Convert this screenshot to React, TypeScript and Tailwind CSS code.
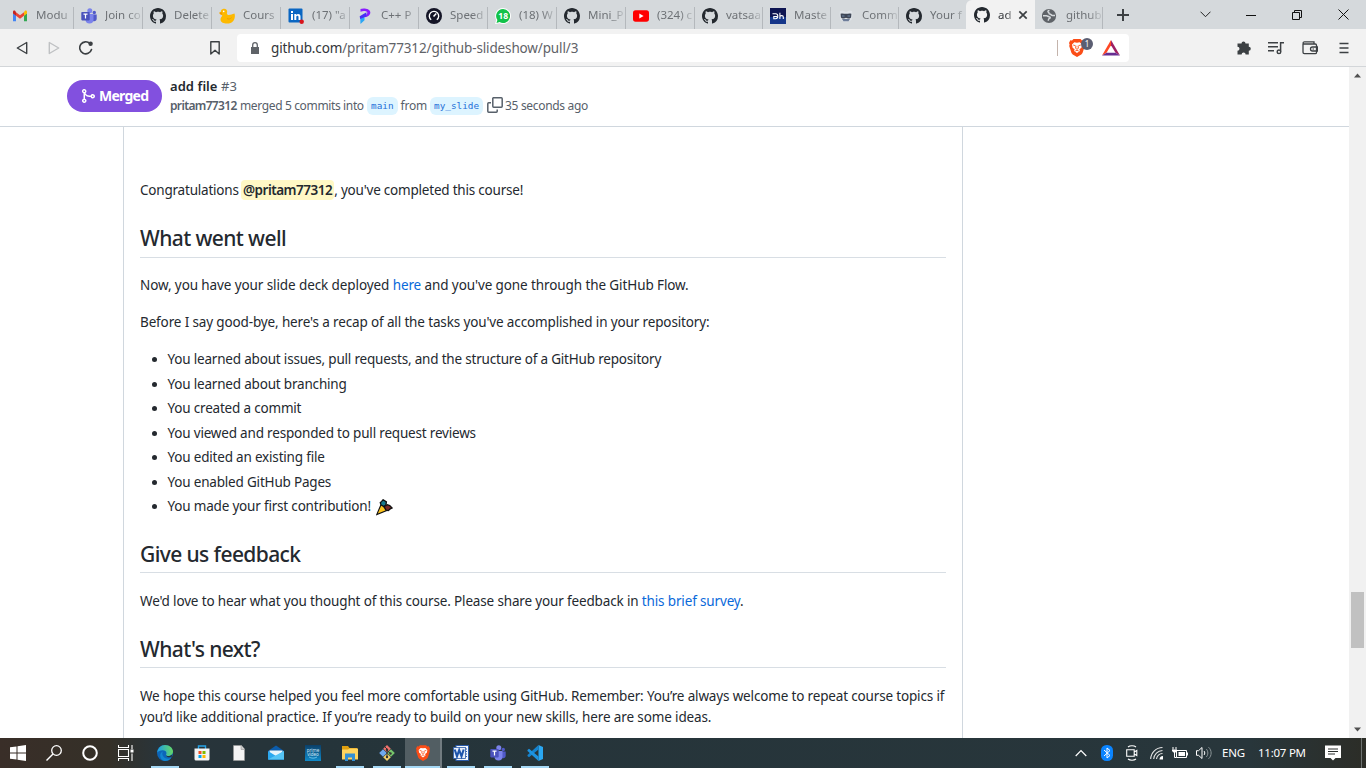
import type { ReactNode } from "react";

const GITHUB =
  "M8 0C3.58 0 0 3.58 0 8c0 3.54 2.29 6.53 5.47 7.59.4.07.55-.17.55-.38 0-.19-.01-.82-.01-1.49-2.01.37-2.53-.49-2.69-.94-.09-.23-.48-.94-.82-1.13-.28-.15-.68-.52-.01-.53.63-.01 1.08.58 1.23.82.72 1.21 1.87.87 2.33.66.07-.52.28-.87.51-1.07-1.78-.2-3.64-.89-3.64-3.95 0-.87.31-1.59.82-2.15-.08-.2-.36-1.02.08-2.12 0 0 .67-.21 2.2.82.64-.18 1.32-.27 2-.27.68 0 1.36.09 2 .27 1.53-1.04 2.2-.82 2.2-.82.44 1.1.16 1.92.08 2.12.51.56.82 1.27.82 2.15 0 3.07-1.87 3.75-3.65 3.95.29.25.54.73.54 1.48 0 1.07-.01 1.93-.01 2.2 0 .21.15.46.55.38A8.013 8.013 0 0016 8c0-4.42-3.58-8-8-8z";

function Svg({ children, className = "size-4", box = "0 0 16 16" }: { children: ReactNode; className?: string; box?: string }) {
  return (
    <svg viewBox={box} className={`shrink-0 ${className}`} fill="none">
      {children}
    </svg>
  );
}

const Github = () => (
  <Svg>
    <path d={GITHUB} fill="#24292f" />
  </Svg>
);

const Gmail = () => (
  <Svg>
    <path d="M1 4v9.2h3V7.4L1 5z" fill="#4285f4" />
    <path d="M15 4v9.2h-3V7.4L15 5z" fill="#34a853" />
    <path d="M12 4.2v3.6l3-2.3V4c0-1.6-1.5-1.800-2.300-1.100z" fill="#fbbc04" />
    <path d="M4 4.200v3.600L8 10.800l4-3V4.200L8 7.200z" fill="#ea4335" />
    <path d="M1 4v1.500l3 2.300V4.200L3.300 2.900C2.300 2.200 1 2.700 1 4z" fill="#c5221f" />
  </Svg>
);

const Teams = ({ className = "size-4" }: { className?: string }) => (
  <Svg className={className}>
    <circle cx="13.300" cy="4.500" r="1.700" fill="#5059c9" />
    <path d="M10.500 6.500h5.200v4.300c0 1.600-1 2.500-2.500 2.500h-1z" fill="#5059c9" />
    <circle cx="8.800" cy="2.800" r="2.500" fill="#7b83eb" />
    <path d="M4.500 6h8v5.500A4 4 0 0 1 4.500 11.500z" fill="#7b83eb" />
    <rect x="0.300" y="4" width="8.400" height="8.400" rx="0.800" fill="#4b53bc" />
    <path d="M2.500 6.200h4M4.500 6.200v4.300" stroke="#fff" strokeWidth="1.200" />
  </Svg>
);

const Duck = () => (
  <Svg>
    <path d="M4.500.8C7 .3 8.700 2.300 8 5c-.3 1.200.4 2 1.800 2 2.300 0 3.200-.8 5.700-1.500.8 2.500.3 5.500-1.300 7.500-1.500 2-3.500 2.500-6.200 2.500-3.300 0-6.300-1-6.500-4C1.400 9.500 3.200 8.800 3.300 7.300 2 7 .8 6 .3 4.700l1.500-.6C1.800 2.300 2.800 1.100 4.500.8z" fill="#fdb900" />
    <path d="M.3 4.700l2.200-.8.8 2.600C1.800 6.600.8 6 .3 4.700z" fill="#f59500" />
    <circle cx="4.700" cy="3.400" r=".8" fill="#fff" />
    <path d="M8 10.500c1.500 1 3.500.6 4.500-1" stroke="#f0a000" />
  </Svg>
);

const Linkedin = () => (
  <Svg>
    <rect x="0.500" y="0.500" width="14" height="14" rx="1" fill="#0a66c2" />
    <path d="M3 6h2v6H3zM3 3h2v2H3zM6.300 6h1.900v.9c1-1.500 4.300-1.400 4.300 1.500V12h-2V8.900c0-1.600-2.200-1.500-2.200 0V12h-2z" fill="#fff" />
    <circle cx="13.700" cy="13.700" r="2.200" fill="#d8141c" />
  </Svg>
);

const Purple = () => (
  <Svg>
    <path d="M3.500 1C6-.2 13 .3 13.300 4.200c.2 3-2.500 4.600-5.300 5L7 7.500c2-.6 3.500-1.500 3.300-3C10 3 6.500 2.500 3.500 3.700z" fill="#8a1cff" />
    <path d="M3.200 9.500L7.500 7.300v5L3.500 16z" fill="#2ba7f5" />
    <path d="M2.700 8.200L9.500 4.200l-.3 4.300-6 2.500z" fill="#4b2ff5" />
  </Svg>
);

const Speed = () => (
  <Svg>
    <circle cx="8" cy="8" r="8" fill="#141526" />
    <path d="M5.200 11.800A4.700 4.700 0 1 1 10.800 11.800" stroke="#fff" strokeWidth="1.400" />
    <path d="M7.500 8.500L10.300 5.600" stroke="#fff" strokeWidth="1.500" />
  </Svg>
);

const Whatsapp = () => (
  <Svg>
    <path d="M8 0a8 8 0 1 1-3.500 15.200L0 16l1.200-4A8 8 0 0 1 8 0z" fill="#fff" />
    <path d="M8 1a7 7 0 1 1-3.400 13.100L1.500 15l.9-3A7 7 0 0 1 8 1z" fill="#12c24a" />
    <text x="8.200" y="11" textAnchor="middle" fontSize="8.500" fontWeight="700" fill="#fff" fontFamily="Noto Sans, sans-serif">18</text>
  </Svg>
);

const Youtube = () => (
  <Svg>
    <rect x="0" y="2.300" width="16" height="11.400" rx="2.600" fill="#f00" />
    <path d="M6.300 5.600v4.800L10.600 8z" fill="#fff" />
  </Svg>
);

const Dh = () => (
  <Svg>
    <rect width="16" height="16" fill="#0e1552" />
    <rect y="9" width="16" height="7" fill="#15368a" />
    <path d="M2.500 5.800h3.300c1.500 0 2 1 2 2.300S7 10.800 5.500 10.800H3.800V8.500H7M9.900 4.800V11M9.900 8.500c.5-1.200 3.400-1.400 3.400.5V11" stroke="#fff" strokeWidth="1.100" />
  </Svg>
);

const Masked = () => (
  <Svg>
    <path d="M2 3l2.500-.5L8 4l3.500-1.500L14 3l.5 4-1 5-5.500 2-5.500-2-1-5z" fill="#dfe3e8" />
    <path d="M2.600 5.800c2-.9 3.500 0 5.400 0s3.400-.9 5.400 0l-.3 3.400c-.3 1.600-3.800 1.800-5.100.6-1.300 1.200-4.800 1-5.100-.6z" fill="#3f4757" />
    <path d="M4 8h2.500M9.500 8H12" stroke="#6f86a6" />
    <path d="M4 11h8l-1.500 2.300h-5z" fill="#6d7d99" />
  </Svg>
);

const Globe = () => (
  <Svg>
    <circle cx="7" cy="8" r="7.100" fill="#5f6368" />
    <path d="M1 7.800h3.500c1 0 1.600.8 2.800.9 1.200 0 1.200 1.600 0 1.800-1 .2-1 1.200-1 2.200M7.500 2.500c-1.800 0-2 1.200-1 1.900 1 .6 0 1.400 1.200 1.600 1.600.2 1.300 1.500 2.700 1.500h2.600" stroke="#d5d9dc" strokeWidth="1.500" />
  </Svg>
);

type Tab = { icon: ReactNode; title: string; width: string; separator?: boolean };

const tabs: Tab[] = [
  { icon: <Gmail />, title: "Modu", width: "w-[74px] pl-3" },
  { icon: <Teams />, title: "Join co", width: "w-[69px] pl-[7px]" },
  { icon: <Github />, title: "Delete", width: "w-[69px] pl-[7px]" },
  { icon: <Duck />, title: "Cours", width: "w-[69px] pl-[7px]" },
  { icon: <Linkedin />, title: '(17) "a', width: "w-[69px] pl-[7px]" },
  { icon: <Purple />, title: "C++ P", width: "w-[69px] pl-[7px]" },
  { icon: <Speed />, title: "Speed", width: "w-[69px] pl-[7px]" },
  { icon: <Whatsapp />, title: "(18) W", width: "w-[69px] pl-[7px]" },
  { icon: <Github />, title: "Mini_P", width: "w-[69px] pl-[7px]" },
  { icon: <Youtube />, title: "(324) c", width: "w-[69px] pl-[7px]" },
  { icon: <Github />, title: "vatsaa", width: "w-[68px] pl-[7px]" },
  { icon: <Dh />, title: "Maste", width: "w-[68px] pl-[7px]" },
  { icon: <Masked />, title: "Comm", width: "w-[68px] pl-[7px]" },
  { icon: <Github />, title: "Your f", width: "w-[67px] pl-[7px]", separator: false },
];

function TabItem({ icon, title, width, separator = true }: Tab) {
  return (
    <div className={`flex h-[29px] shrink-0 items-center ${width}`}>
      <span className="flex pt-[2px]">{icon}</span>
      <span className="ml-2 min-w-0 flex-1 whitespace-nowrap text-[11.5px] text-[#6d7175] [mask-image:linear-gradient(to_right,black_60%,rgba(0,0,0,0.25)_95%)]">{title}</span>
      {separator && <span className="h-[22px] w-px self-end bg-[#b4b8bc]" />}
    </div>
  );
}

function Lion({ className }: { className: string }) {
  return (
    <Svg className={className} box="0 0 16 18">
      <path d="M4.500 0h7l1.500 1.500 1.700-.2L16 4l-.6 1.500.4 1.500-2.300 7-1.200 1.500L8 18l-4.300-2.500L2.500 14 .2 7l.4-1.500L0 4l1.300-2.700 1.700.2z" fill="#fb4d17" />
      <path d="M5.300 3.200L8 3.700l2.700-.5 2.300 2.400-.6 3.200-2 1.400.5 1.700L8 14l-2.900-2.100.5-1.700-2-1.400L3 5.600z" fill="#fff" />
      <path d="M4.200 6l2.300.7M11.800 6l-2.300.7M7 6.800l-.4 2.500L8 10.300l1.400-1L9 6.800M6.300 12L8 11.200l1.700.8" stroke="#fb4d17" strokeWidth=".9" />
    </Svg>
  );
}

function TabStrip() {
  return (
    <div className="flex h-[29px] items-end bg-[#d5d9dc]">
      {tabs.map((t, i) => (
        <TabItem key={i} {...t} />
      ))}
      <div className="flex h-[29px] w-[69px] shrink-0 items-center rounded-tl-md bg-[#f2f2f2] pl-2 pt-[1px]">
        <Github />
        <span className="ml-2 w-[14px] whitespace-nowrap text-[11.5px] text-[#33363a] [mask-image:linear-gradient(to_right,black_60%,rgba(0,0,0,0.4))]">ad</span>
        <Svg className="ml-[6px] size-[10px]" box="0 0 10 10">
          <path d="M1.300 1.300l7.400 7.400M8.700 1.300L1.300 8.700" stroke="#3c4043" strokeWidth="1.700" />
        </Svg>
      </div>
      <TabItem icon={<Globe />} title="github" width="w-[68px] pl-[7px]" />
      <div className="flex h-[29px] flex-1 items-center">
        <Svg className="ml-[14px] size-3" box="0 0 12 12">
          <path d="M6 0v12M0 6h12" stroke="#3c4043" strokeWidth="2" />
        </Svg>
        <Svg className="ml-[71px] h-[7px] w-[11px]" box="0 0 11 7">
          <path d="M.5.700l5 5 5-5" stroke="#222" />
        </Svg>
        <Svg className="ml-[35px] size-[10px]" box="0 0 10 10">
          <path d="M0 5.500h10" stroke="#111" />
        </Svg>
        <Svg className="ml-[36px] size-[10px]" box="0 0 10 10">
          <path d="M.5 2.500h7v7h-7zM2.500 2.500v-2h7v7h-2" stroke="#111" />
        </Svg>
        <Svg className="ml-9 size-[11px]" box="0 0 11 11">
          <path d="M.5.500l10 10M10.500.500l-10 10" stroke="#111" />
        </Svg>
      </div>
    </div>
  );
}

function Toolbar() {
  return (
    <div className="flex h-[38px] items-center border-b border-[#d3d6d9] bg-[#f2f2f2]">
      <Svg className="ml-4 h-[14px] w-3" box="0 0 12 14">
        <path d="M10.700 1.500v11L1.300 7z" stroke="#3c4043" strokeWidth="1.400" strokeLinejoin="round" />
      </Svg>
      <Svg className="ml-5 h-[14px] w-3" box="0 0 12 14">
        <path d="M1.300 1.500v11L10.700 7z" stroke="#bfc1c3" strokeWidth="1.400" strokeLinejoin="round" />
      </Svg>
      <Svg className="ml-[19px] size-[14px]" box="0 0 14 14">
        <path d="M12.500 8.500A6 6 0 1 1 11 2.600" stroke="#3c4043" strokeWidth="1.600" strokeLinecap="round" />
        <circle cx="11.600" cy="2.800" r="2.200" fill="#3c4043" />
      </Svg>
      <Svg className="ml-[117px] h-[14px] w-[10px]" box="0 0 10 14">
        <path d="M.8.8h8.400v12.200L5 9.300.8 13z" stroke="#3c4043" strokeWidth="1.400" strokeLinejoin="round" />
      </Svg>
      <div className="ml-[17px] flex h-7 w-[892px] items-center rounded bg-white">
        <Svg className="ml-[14px] h-3 w-2" box="0 0 8 12">
          <path d="M0 5h8v7H0z" fill="#5f6368" />
          <path d="M1.700 5V3a2.300 2.300 0 0 1 4.600 0v2" stroke="#5f6368" strokeWidth="1.300" />
        </Svg>
        <span className="ml-3 w-[786px] whitespace-nowrap pt-[2px] text-[13.5px] tracking-[-0.14px] text-[#5f6368]">
          <span className="text-[#33363a]">github.com</span>/pritam77312/github-slideshow/pull/3
        </span>
        <span className="h-4 w-px bg-[#c4b4ac]" />
        <div className="relative ml-[11px] flex">
          <Lion className="h-[18px] w-4" />
          <span className="absolute left-3 top-[-1px] flex size-3 items-center justify-center rounded-full bg-[#5b5e72] text-[8px] text-white">1</span>
        </div>
        <Svg className="ml-[17px] h-4 w-[18px]" box="0 0 18 16">
          <path d="M9 0L0 15.500l4.500-2.700L9 5.300z" fill="#ff4724" />
          <path d="M9 0l9 15.500-4.500-2.700L9 5.300z" fill="#9e1f63" />
          <path d="M0 15.500h18l-4.500-2.700h-9z" fill="#662d91" />
        </Svg>
      </div>
      <Svg className="ml-[107px] size-4" box="0 0 16 16">
        <path d="M5.500 3.500a2 2 0 1 1 4 0H12.800V6.700a2 2 0 1 1 0 4V14.500H9.600a2 2 0 0 0-4 0H1.500V10.800a2 2 0 0 0 0-4V3.500z" fill="#3c4043" />
      </Svg>
      <Svg className="ml-4 size-4" box="0 0 16 16">
        <path d="M0 2.700h10M0 6.700h10M0 10.700h6M12.600 11.500V2.700H16" stroke="#3c4043" strokeWidth="1.500" />
        <circle cx="11" cy="11.800" r="1.800" stroke="#3c4043" strokeWidth="1.400" />
      </Svg>
      <Svg className="ml-[18px] size-4" box="0 0 16 16">
        <path d="M1 3.500v8.800c0 .9.500 1.400 1.400 1.400h10.800c.8 0 1.300-.5 1.300-1.300V5.300c0-.8-.5-1.300-1.300-1.300H2.500C.7 4 .7 1.800 2.500 1.800H12V4M15.500 7H10.500a2 2 0 0 0 0 4h5z" stroke="#3c4043" strokeWidth="1.300" />
        <path d="M10.500 9h1.500" stroke="#3c4043" />
      </Svg>
      <Svg className="ml-[21px] h-[14px] w-[10px]" box="0 0 10 14">
        <path d="M.5 2.500h9M.5 7h9M.5 11.500h9" stroke="#3c4043" strokeWidth="1.700" />
      </Svg>
    </div>
  );
}

function Branch({ children }: { children: ReactNode }) {
  return <span className="flex h-[18px] items-center rounded-md bg-[#ddf4ff] px-1 pt-px font-['DejaVu_Sans_Mono','Liberation_Mono',monospace] text-[9.35px] tracking-normal text-[#1f6fd8]">{children}</span>;
}

function PullHeader() {
  return (
    <header className="flex h-[60px] items-center border-b border-[#d0d7de] bg-white pl-[67px]">
      <div className="mb-[2px] flex h-8 w-[95px] items-center gap-[3px] rounded-full bg-[#8250df] pl-[13px] font-bold text-white">
        <Svg>
          <path
            fill="#fff"
            fillRule="evenodd"
            d="M5 3.254V3.250v.005a.75.75 0 110-.005v.004zm.45 1.900a2.250 2.250 0 10-1.950.218v5.256a2.250 2.250 0 101.500 0V7.123A5.735 5.735 0 009.250 9h1.378a2.251 2.251 0 100-1.500H9.250a4.250 4.250 0 01-3.800-2.346zM12.750 9a.75.75 0 100-1.500.75.75 0 000 1.500zm-8.500 4.500a.75.75 0 100-1.500.75.75 0 000 1.500z"
          />
        </Svg>
        <span className="text-[14px] tracking-[-0.75px]">Merged</span>
      </div>
      <div className="mb-[1px] ml-2 flex flex-col">
        <div className="h-[20px] text-[13px] leading-5 tracking-[0.06px]">
          <span className="font-semibold">add file</span> <span className="text-[#57606a]">#3</span>
        </div>
        <div className="flex h-5 items-center whitespace-nowrap text-[12px] tracking-[-0.36px] text-[#57606a]">
          <span className="w-[67px] font-semibold tracking-[-0.65px]">pritam77312</span>
          <span className="ml-[3px] w-[127px]">merged 5 commits into</span>
          <Branch>main</Branch>
          <span className="ml-[3px] mr-[3px] tracking-[-0.2px]">from</span>
          <Branch>my_slide</Branch>
          <Svg className="ml-1 mr-[2px] mb-0.5 size-4">
            <path d="M5.700.8h8.600c.5 0 .9.4.9.9v7.600c0 .5-.4.900-.9.900H6.700c-.5 0-.9-.4-.9-.9V.8zM4 5.800H1.700c-.5 0-.9.400-.9.900v7.600c0 .5.400.900.900.900h7.600c.5 0 .9-.4.9-.9V12.500" stroke="#57606a" strokeWidth="1.500" />
          </Svg>
          <span className="tracking-[-0.33px]">35 seconds ago</span>
        </div>
      </div>
    </header>
  );
}

function Heading({ children, spacing = "mb-[17.5px] pb-[5px]" }: { children: ReactNode; spacing?: string }) {
  return <h2 className={`mt-6 border-b border-[#d8dee4] text-[21px] font-medium leading-[26.25px] tracking-[-0.6px] ${spacing}`}>{children}</h2>;
}

const tasks = [
  "You learned about issues, pull requests, and the structure of a GitHub repository",
  "You learned about branching",
  "You created a commit",
  "You viewed and responded to pull request reviews",
  "You edited an existing file",
  "You enabled GitHub Pages",
];

const Party = () => (
  <Svg className="ml-[5px] mt-0.5 size-[17px]" box="0 0 18 18">
    <path d="M5.500 5.500L.8 16.500 12 12z" fill="#fcc21b" stroke="#111" strokeWidth="1.200" />
    <path d="M4.500 4L6 2.500 7.500.8 11 3l-.5 3.500L8.500 8 5.500 6.500z" fill="#17788c" stroke="#111" strokeWidth="1.400" />
    <path d="M8.500 8l3.500-2 2.500 1 2.500 2.500-2 1-2 1.800-2.500-.5z" fill="#7a2926" stroke="#111" strokeWidth="1.400" />
  </Svg>
);

function Comment() {
  return (
    <article className="ml-[123px] h-full w-[840px] border-x border-[#d0d7de] px-4 pt-[52.5px] text-[13.5px] leading-[21px] tracking-[-0.16px]">
      <p className="tracking-[-0.21px]">
        Congratulations <span className="-ml-px rounded-sm bg-[#fff8c5] px-[2px] py-[1px] font-semibold tracking-[-0.5px]">@pritam77312</span>, you've completed this course!
      </p>
      <Heading spacing="mb-[17.2px] pb-[6.3px]">What went well</Heading>
      <p className="mb-4 tracking-[-0.1px]">
        Now, you have your slide deck deployed <a className="text-[#0969da]">here</a> and you've gone through the GitHub Flow.
      </p>
      <p className="mb-4 tracking-[-0.14px]">Before I say good-bye, here's a recap of all the tasks you've accomplished in your repository:</p>
      <ul className="flex list-disc flex-col gap-[3.5px] pl-[27.5px] tracking-[-0.19px]">
        {tasks.map((t) => (
          <li key={t}>{t}</li>
        ))}
        <li>
          <span className="flex h-[21px] items-center">
            You made your first contribution! <Party />
          </span>
        </li>
      </ul>
      <Heading>Give us feedback</Heading>
      <p className="tracking-[-0.15px]">
        We'd love to hear what you thought of this course. Please share your feedback in <a className="text-[#0969da]">this brief survey</a>.
      </p>
      <Heading>What's next?</Heading>
      <p className="whitespace-nowrap">
        We hope this course helped you feel more comfortable using GitHub. Remember: You’re always welcome to repeat course topics if
        <br />
        <span className="tracking-[-0.13px]">you’d like additional practice. If you’re ready to build on your new skills, here are some ideas.</span>
      </p>
    </article>
  );
}

function Scrollbar() {
  return (
    <div className="flex w-[17px] flex-col items-center justify-between bg-[#f1f1f1] py-[6px]">
      <Svg className="h-[5px] w-[7px]" box="0 0 7 4">
        <path d="M0 4h7L3.500 0z" fill="#505050" />
      </Svg>
      <div className="mt-[435px] h-14 w-[13px] bg-[#c1c1c1]" />
      <Svg className="h-[5px] w-[7px]" box="0 0 7 4">
        <path d="M0 0h7L3.500 4z" fill="#505050" />
      </Svg>
    </div>
  );
}

function Task({ children, open = false, active = false }: { children: ReactNode; open?: boolean; active?: boolean }) {
  return (
    <div className={`flex h-full w-[37px] shrink-0 flex-col items-center ${active ? "border-r-2 border-[#717b80] bg-[#525e63]" : ""}`}>
      <div className="flex h-7 items-center pt-[2px]">{children}</div>
      {open && <div className={`h-[2px] bg-[#a5d8f5] ${active ? "w-full" : "w-7"}`} />}
    </div>
  );
}

function Taskbar() {
  return (
    <footer className="flex h-[30px] bg-[linear-gradient(90deg,#392e28_0,#343028_110px,#29343a_160px,#25343a_300px,#28363b_1250px,#2c2d27_1366px)] text-white">
      <div className="flex w-[146px] items-center">
        <div className="flex w-9 justify-center">
          <Svg>
            <path d="M0 2.300l6.500-.9v6.100H0zM7.500 1.200L16 0v7.500H7.500zM0 8.500h6.500v6.100L0 13.700zM7.500 8.500H16V16l-8.500-1.200z" fill="#fff" />
          </Svg>
        </div>
        <div className="flex w-9 justify-center">
          <Svg>
            <circle cx="10.500" cy="5.500" r="4.800" stroke="#fff" strokeWidth="1.300" />
            <path d="M7 9L.5 15.500" stroke="#fff" strokeWidth="1.400" />
          </Svg>
        </div>
        <div className="flex w-9 justify-center">
          <Svg>
            <circle cx="8" cy="8" r="6.800" stroke="#fff" strokeWidth="2" />
          </Svg>
        </div>
        <div className="flex w-9 justify-center">
          <Svg>
            <path d="M.5 0v2.500h10V0M.5 16v-2.500h10V16M.5 4.500h10v7H.5zM14 0v4M14 8.500V16" stroke="#fff" strokeWidth="1.100" />
            <path d="M12.500 4.500h3v3h-3z" fill="#fff" />
          </Svg>
        </div>
      </div>
      <Task open>
        <Svg className="size-4">
          <defs>
            <linearGradient id="edge" x1="0" y1="0.300" x2="1" y2="0.200">
              <stop offset="0" stopColor="#1d9de8" />
              <stop offset="1" stopColor="#68db60" />
            </linearGradient>
          </defs>
          <circle cx="8" cy="8" r="8" fill="#0c65b8" />
          <path d="M.2 7.500C.8 3 4 0 8 0c4.700 0 8 3.300 8 6.500 0 3-2.500 4.500-4.800 4.500-1.700 0-2.700-.7-2-1.800.8-1.200.1-3.900-3.300-4C3.300 5.100 1 6.300.2 7.500z" fill="url(#edge)" />
          <path d="M6 6.500c-2 2.500.5 7.500 5.500 7.200 1.500-.1 2.500-.7 3-1.200-1.500 2.500-4 3.500-6.500 3.500C4.500 16 2.800 12 3.300 9.500c.3-1.500 1.200-2.500 2.700-3z" fill="#1285cf" />
          <path d="M15 11.500c-1.500 1-5.500 1.500-6-1.500 1 1.700 4.500 1.200 6-.5z" fill="#25343a" />
        </Svg>
      </Task>
      <Task>
        <Svg>
          <path d="M4.500 4V1h7v3" stroke="#27a4e8" strokeWidth="1.400" />
          <path d="M.5 3.500h15V14a1.500 1.500 0 0 1-1.500 1.500H2A1.500 1.500 0 0 1 .5 14z" fill="#f4f4f4" />
          <path d="M4.500 6h3v3h-3z" fill="#f25022" />
          <path d="M8.500 6h3v3h-3z" fill="#7fba00" />
          <path d="M4.500 10h3v3h-3z" fill="#00a4ef" />
          <path d="M8.500 10h3v3h-3z" fill="#ffb900" />
        </Svg>
      </Task>
      <Task>
        <Svg>
          <path d="M2.500.500h8L13.500 4v11.500h-11z" fill="#f4f4f4" stroke="#999" strokeWidth=".6" />
          <path d="M10 .5V4.500h3.500" fill="#ccc" stroke="#888" strokeWidth=".5" />
        </Svg>
      </Task>
      <Task>
        <Svg>
          <path d="M0 6l8-5.500L16 6v8.500H0z" fill="#0c5cab" />
          <path d="M1.500 5.500h13V9L8 11.500 1.500 9z" fill="#e8f5fc" />
          <path d="M0 6l8 5 8-5v8.500H0z" fill="#2ba8ef" />
          <path d="M0 14.500L16 6v8.500z" fill="#55c4f5" />
        </Svg>
      </Task>
      <Task>
        <Svg>
          <defs>
            <linearGradient id="prime" x1="0" y1="0" x2="0" y2="1">
              <stop stopColor="#0b3f68" />
              <stop offset="1" stopColor="#108ac9" />
            </linearGradient>
          </defs>
          <rect width="16" height="16" fill="url(#prime)" />
          <text x="8" y="6.500" fontSize="4.500" textAnchor="middle" fill="#cfe6f4" fontFamily="Noto Sans, sans-serif">prime</text>
          <text x="8" y="10.500" fontSize="4.500" textAnchor="middle" fill="#cfe6f4" fontFamily="Noto Sans, sans-serif">video</text>
          <path d="M4 12c2.500 1.500 5.500 1.500 8 0" stroke="#7cd0f4" strokeWidth=".8" />
        </Svg>
      </Task>
      <Task open>
        <Svg>
          <path d="M0 1h6l1.500 2H15v3H0z" fill="#e0a010" />
          <path d="M0 4.500h6L7.500 3.500H16V14.500H0z" fill="#ffd45e" />
          <path d="M3 8.500h10V16h-3v-3.500H6V16H3z" fill="#3490d4" />
        </Svg>
      </Task>
      <Task open>
        <Svg>
          <path d="M8 0l3.800 3.800L8 7.600 4.200 3.800z" fill="#f0716b" />
          <path d="M4 4.200L7.800 8 4 11.800.2 8z" fill="#6fa8ee" />
          <path d="M12 4.200L15.800 8 12 11.800 8.200 8z" fill="#76c56b" />
          <path d="M8 8.400l3.800 3.800L8 16l-3.800-3.800z" fill="#f4d06a" />
          <path d="M6 2l2 2v8M8 5.500L11.500 8.500" stroke="#333" />
          <circle cx="8" cy="4.800" r="1.200" fill="#333" />
          <circle cx="8" cy="12" r="1.200" fill="#333" />
          <circle cx="11.500" cy="8.500" r="1.200" fill="#333" />
        </Svg>
      </Task>
      <Task open active>
        <Lion className="h-4 w-[14px]" />
      </Task>
      <Task open>
        <Svg>
          <rect x="3" y=".5" width="12.500" height="15" fill="#f5f8fc" stroke="#2b5ba8" />
          <path d="M12.500 4H14M12.500 6.500H14M12.500 9H14M12.500 11.500H14" stroke="#2b5ba8" />
          <rect x="0.400" y="2.500" width="12" height="11" fill="#e8effa" stroke="#2b5ba8" strokeWidth=".8" />
          <path d="M1.700 4.500L4 11.300 6.200 5l2.300 6.300 2.200-6.800" stroke="#1e55ac" strokeWidth="2.100" />
        </Svg>
      </Task>
      <Task open>
        <Teams />
      </Task>
      <Task open>
        <Svg>
          <path d="M11.500 0L16 2v12l-4.500 2z" fill="#2aa7f2" />
          <path d="M11.500 0v4.500L2 12.200.5 11v-1z" fill="#1583ce" />
          <path d="M11.500 16v-4.500L2 3.800.5 5v1z" fill="#1d93e0" />
        </Svg>
      </Task>
      <div className="ml-auto flex items-center">
        <Svg className="h-2 w-3" box="0 0 12 8">
          <path d="M.7 7L6 1.500 11.300 7" stroke="#fff" strokeWidth="1.200" />
        </Svg>
        <Svg className="ml-[14px] h-4 w-3" box="0 0 12 16">
          <rect width="12" height="16" rx="5.500" fill="#0a84ff" />
          <path d="M3 5l6 5.500L6 13V3l3 2.500L3 11" stroke="#fff" />
        </Svg>
        <Svg className="ml-[13px] h-4 w-3" box="0 0 12 16">
          <path d="M2 2C4 .3 8 .3 10 2M2 14c2 1.700 6 1.700 8 0M.7 4.700h7.500v6.600H.7zM8.200 7l2.600-1.500v5L8.200 9" stroke="#fff" strokeWidth="1.100" />
        </Svg>
        <Svg className="ml-3 size-[14px]" box="0 0 14 14">
          <path d="M.7 13A12 12 0 0 1 12.500 1.500M3.700 13A9 9 0 0 1 12.500 4.500M6.500 13a6 6 0 0 1 6-5.500" stroke="#e6e6e6" strokeWidth="1.100" />
          <path d="M9.500 13.500a3.500 3.500 0 0 1 3.500-3.500v3.500z" fill="#fff" />
        </Svg>
        <Svg className="ml-2 h-3 w-4" box="0 0 16 12">
          <path d="M4.500 3.500h10v7h-10zM15.500 5.500v3M1 0v2.500M4 0v2.500M2.500 5v5.500h2" stroke="#fff" />
          <path d="M0 2.500h5v1.500L3.500 5.500h-2L0 4zM6.500 5H13v4H6.500z" fill="#fff" />
        </Svg>
        <Svg className="ml-2 h-[14px] w-4" box="0 0 16 14">
          <path d="M.5 4.700h2L6 1.500v11L2.500 9.300h-2z" stroke="#fff" />
          <path d="M8 5c1 1 1 3 0 4" stroke="#fff" />
          <path d="M10.200 3c2.200 2 2.200 6 0 8M12.500 1.200c3.500 3 3.500 8.600 0 11.600" stroke="#8d9699" />
        </Svg>
        <span className="ml-[10px] w-9 text-[11.5px] tracking-[-0.2px]">ENG</span>
        <span className="w-[67px] whitespace-nowrap text-[11.5px] tracking-[-0.25px]">11:07 PM</span>
        <Svg className="size-4" box="0 0 16 16">
          <path d="M0 .500h16v12.500h-5.500L8 15.500 5.500 13H0z" fill="#fff" />
          <path d="M3 4h10M3 6.500h10M3 9h7" stroke="#2a2f2d" />
        </Svg>
        <span className="ml-5 mr-1 h-[30px] w-px bg-[#6d7270]" />
      </div>
    </footer>
  );
}

export default function App() {
  return (
    <div className="flex h-screen w-full flex-col overflow-hidden bg-white font-['Noto_Sans','Open_Sans',sans-serif] text-[#24292f]">
      <TabStrip />
      <Toolbar />
      <div className="flex min-h-0 flex-1">
        <main className="flex min-w-0 flex-1 flex-col">
          <PullHeader />
          <div className="min-h-0 flex-1 overflow-hidden">
            <Comment />
          </div>
        </main>
        <Scrollbar />
      </div>
      <Taskbar />
    </div>
  );
}
